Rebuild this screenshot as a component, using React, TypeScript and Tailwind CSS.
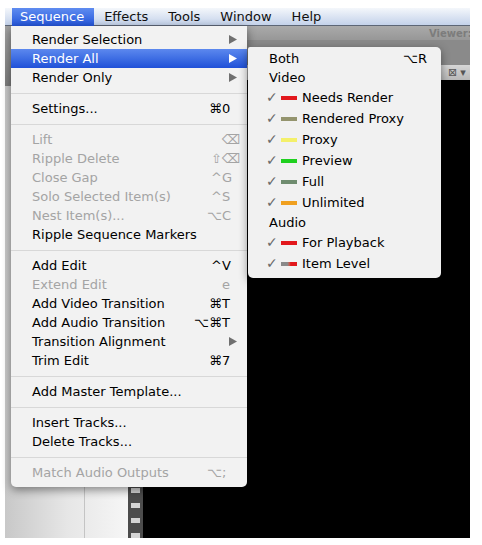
import React from 'react';

type Row = {
  label: string;
  mods?: string;
  keyChar?: string;
  arrow?: boolean;
  disabled?: boolean;
  active?: boolean;
};
type Entry = Row | 'sep';

const mainItems: Entry[] = [
  { label: 'Render Selection', arrow: true },
  { label: 'Render All', arrow: true, active: true },
  { label: 'Render Only', arrow: true },
  'sep',
  { label: 'Settings...', mods: '⌘', keyChar: '0' },
  'sep',
  { label: 'Lift', keyChar: '⌫', disabled: true },
  { label: 'Ripple Delete', mods: '⇧', keyChar: '⌫', disabled: true },
  { label: 'Close Gap', mods: '^', keyChar: 'G', disabled: true },
  { label: 'Solo Selected Item(s)', mods: '^', keyChar: 'S', disabled: true },
  { label: 'Nest Item(s)...', mods: '⌥', keyChar: 'C', disabled: true },
  { label: 'Ripple Sequence Markers' },
  'sep',
  { label: 'Add Edit', mods: '^', keyChar: 'V' },
  { label: 'Extend Edit', keyChar: 'e', disabled: true },
  { label: 'Add Video Transition', mods: '⌘', keyChar: 'T' },
  { label: 'Add Audio Transition', mods: '⌥⌘', keyChar: 'T' },
  { label: 'Transition Alignment', arrow: true },
  { label: 'Trim Edit', mods: '⌘', keyChar: '7' },
  'sep',
  { label: 'Add Master Template...' },
  'sep',
  { label: 'Insert Tracks...' },
  { label: 'Delete Tracks...' },
  'sep',
  { label: 'Match Audio Outputs', mods: '⌥', keyChar: ';', disabled: true },
];

// swatch classes written out in full so tailwind picks them up
const videoRows = [
  { label: 'Needs Render', swatch: 'bg-[#e2181c]' },
  { label: 'Rendered Proxy', swatch: 'bg-[#94946e]' },
  { label: 'Proxy', swatch: 'bg-[#f4f06a]' },
  { label: 'Preview', swatch: 'bg-[#1fd01f]' },
  { label: 'Full', swatch: 'bg-[#6f8c6f]' },
  { label: 'Unlimited', swatch: 'bg-[#f0a020]' },
];

const audioRows = [
  { label: 'For Playback', swatch: 'bg-[#e2181c]' },
  { label: 'Item Level', swatch: 'bg-linear-to-r from-[#8a8a8a] from-40% to-[#e2181c] to-60%' },
];

const menuBar = ['Effects', 'Tools', 'Window', 'Help'];

function Arrow({ white }: { white?: boolean }) {
  return (
    <svg width="8" height="9" viewBox="0 0 8 9" className="mr-[-3px]">
      <polygon points="0,0 8,4.5 0,9" fill={white ? '#ffffff' : '#707070'} />
    </svg>
  );
}

function MenuRow({ row }: { row: Row }) {
  const text = row.active ? 'text-white' : row.disabled ? 'text-[#a4a4a4]' : 'text-black';
  return (
    <div
      className={`flex h-[19px] items-center pl-[21px] pr-[13px] ${text} ${
        row.active ? 'bg-linear-to-b from-[#5c88ee] to-[#2050d8]' : ''
      }`}
    >
      <span className="flex-1 whitespace-nowrap">{row.label}</span>
      {row.arrow && <Arrow white={row.active} />}
      {row.keyChar && (
        <span className="flex items-center">
          <span className="whitespace-nowrap">{row.mods}</span>
          <span className="w-[12px] whitespace-nowrap">{row.keyChar}</span>
        </span>
      )}
    </div>
  );
}

function CheckRow({ label, swatch }: { label: string; swatch: string }) {
  return (
    <div className="flex h-[21px] items-center pl-[18px]">
      <span className="w-[15px] text-[14px] font-bold text-[#6a6a6a]">✓</span>
      <span className={`h-[4px] w-[16px] ${swatch}`} />
      <span className="ml-[5px] whitespace-nowrap">{label}</span>
    </div>
  );
}

export default function App() {
  return (
    <div className="h-[545px] w-[482px] overflow-hidden bg-white pl-[5px] pt-[8px] font-['DejaVu_Sans',sans-serif] text-[13px] leading-[19px]">
      <div className="relative flex h-[520px] w-[465px] flex-col">
        {/* menu bar */}
        <div className="flex h-[18px] items-center border-b border-[#5d6676] bg-linear-to-b from-[#f4f7fb] to-[#c4d2ea] text-[#101010]">
          <div className="ml-[7px] flex h-[18px] items-center bg-linear-to-b from-[#5f8cf0] to-[#2454da] pl-[8px] pr-[10px] text-white">
            Sequence
          </div>
          {menuBar.map((m) => (
            <div key={m} className="px-[10px]">
              {m}
            </div>
          ))}
        </div>

        {/* application window behind the menus */}
        <div className="flex flex-1">
          <div className="flex w-[123px] shrink-0 flex-col">
            <div className="h-[60px] bg-linear-to-b from-[#a2a2a2] to-[#7c7c7c]" />
            <div className="flex flex-1 bg-linear-to-r from-[#c8c8c8] via-[#e6e6e6] to-[#f6f6f6]">
              <div className="w-[80px] border-r border-[#c4c4c4]" />
            </div>
          </div>
          <div className="flex w-[15px] shrink-0 flex-col gap-[10px] overflow-hidden bg-[#4c4c4c] px-[3px] pt-[12px]">
            {Array.from({ length: 34 }).map((_, i) => (
              <div key={i} className="h-[5px] shrink-0 bg-[#d4d4d4]" />
            ))}
          </div>
          <div className="flex min-w-0 flex-1 flex-col">
            <div className="flex h-[14px] items-center overflow-hidden bg-linear-to-b from-[#aaaaaa] to-[#979797] pl-[286px]">
              <span className="whitespace-nowrap text-[10px] font-bold text-[#7c7c7c]">Viewer: Sequence 1</span>
            </div>
            <div className="h-[25px] bg-[#8a8a8a]" />
            <div className="flex h-[15px] items-center bg-linear-to-b from-[#d6d6d6] to-[#b8b8b8] pl-[305px] text-[11px] text-[#555]">
              <span>⊠</span>
              <span className="ml-[3px]">▾</span>
            </div>
            <div className="flex-1 bg-black" />
          </div>
        </div>

        {/* Sequence menu */}
        <div className="absolute left-[6px] top-[18px] w-[236px] rounded-b-[5px] bg-[#f2f2f2] pb-[5px] pt-[4px] shadow-[0_3px_10px_rgba(0,0,0,0.45)]">
          {mainItems.map((item, i) =>
            item === 'sep' ? (
              <div key={i} className="flex h-[12px] items-center">
                <div className="h-px w-full bg-[#d8d8d8]" />
              </div>
            ) : (
              <MenuRow key={i} row={item} />
            )
          )}
        </div>

        {/* Render All submenu */}
        <div className="absolute left-[243px] top-[39px] w-[193px] rounded-[5px] rounded-tl-[2px] bg-[#f1f1f1] pb-[4px] pt-[2px] text-black shadow-[0_3px_10px_rgba(0,0,0,0.45)]">
          <div className="flex h-[19px] items-center pl-[21px] pr-[14px]">
            <span className="flex-1">Both</span>
            <span>⌥R</span>
          </div>
          <div className="flex h-[19px] items-center pl-[21px]">Video</div>
          {videoRows.map((r) => (
            <CheckRow key={r.label} label={r.label} swatch={r.swatch} />
          ))}
          <div className="flex h-[19px] items-center pl-[21px]">Audio</div>
          {audioRows.map((r) => (
            <CheckRow key={r.label} label={r.label} swatch={r.swatch} />
          ))}
        </div>
      </div>
    </div>
  );
}
